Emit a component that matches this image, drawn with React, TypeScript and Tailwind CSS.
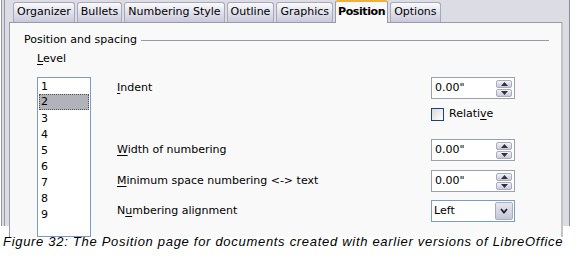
import React from "react";

const tabs = ["Organizer", "Bullets", "Numbering Style", "Outline", "Graphics", "Position", "Options"];

function U({ children }: { children: React.ReactNode }) {
  return <span className="underline underline-offset-2">{children}</span>;
}

function Spin({ value }: { value: string }) {
  return (
    <div className="w-[84px] h-[22px] border border-[#9aa0ac] bg-white flex items-center justify-between pl-[3px] pr-[2px]">
      <span>{value}</span>
      <div className="flex flex-col gap-[1px]">
        <div className="w-[16px] h-[8px] rounded-[2px] border border-[#a8acbc] bg-gradient-to-b from-[#f2f2f8] to-[#c8cad8] flex items-center justify-center">
          <svg width="7" height="4" viewBox="0 0 7 4"><path d="M0 4 L3.5 0 L7 4 Z" fill="#303040" /></svg>
        </div>
        <div className="w-[16px] h-[8px] rounded-[2px] border border-[#a8acbc] bg-gradient-to-b from-[#f2f2f8] to-[#c8cad8] flex items-center justify-center">
          <svg width="7" height="4" viewBox="0 0 7 4"><path d="M0 0 L3.5 4 L7 0 Z" fill="#303040" /></svg>
        </div>
      </div>
    </div>
  );
}

export default function App() {
  return (
    <div className="w-[582px] h-[257px] bg-white overflow-hidden text-[11px] text-black" style={{ fontFamily: '"DejaVu Sans", sans-serif' }}>
      <div className="h-[226px] flex">
        {/* left double border */}
        <div className="w-[9px] flex bg-[#dcdce4]">
          <div className="w-[1px] bg-white" />
          <div className="w-[1px] bg-[#9898a4]" />
          <div className="w-[2px] bg-[#dcdce4]" />
          <div className="w-[1px] bg-[#9898a4]" />
        </div>

        <div className="w-[554px] flex flex-col bg-[#dcdce4]">
          {/* tabs */}
          <div className="h-[25px] flex items-end gap-[2px] pl-[4px]">
            {tabs.map((t) =>
              t === "Position" ? (
                <div key={t} className="h-[23px] px-[2px] -mb-[1px] bg-[#f9f9f9] border border-b-0 border-[#9a9aa4] border-t-2 border-t-[#f0b040] rounded-t-[3px] flex items-center font-bold tracking-[-0.4px] relative z-10">
                  {t}
                </div>
              ) : (
                <div key={t} className="h-[20px] px-[3px] bg-gradient-to-b from-[#fafafc] to-[#c8c8dc] border border-b-0 border-[#a8a8b8] rounded-t-[3px] flex items-center">
                  {t}
                </div>
              )
            )}
          </div>

          {/* panel */}
          <div className="flex-1 bg-[#f9f9f9] border-t border-l border-[#9a9aa4] border-r-2 border-r-[#c4c4c8] pl-[14px] pt-[10px]">
            <div className="flex items-center gap-[4px] h-[14px]">
              <span>Position and spacing</span>
              <div className="w-[408px] h-[1px] bg-[#9a9aa4] mt-[1px]" />
            </div>

            <div className="flex mt-[4px]">
              <div className="w-[93px] pl-[13px]">
                <div className="h-[16px] leading-[16px]"><U>L</U>evel</div>
                <div className="mt-[10px] w-[54px] h-[160px] bg-white border border-[#7d9cc4] pt-[0px] pl-[1px] pr-[1px]">
                  {["1", "2", "3", "4", "5", "6", "7", "8", "9"].map((n) => (
                    <div
                      key={n}
                      className={
                        n === "2"
                          ? "h-[16px] leading-[14px] pl-[1px] bg-[#b2b2ba] border border-dotted border-[#505060]"
                          : "h-[16px] leading-[17px] pl-[2px]"
                      }
                    >
                      {n}
                    </div>
                  ))}
                </div>
              </div>

              <div className="w-[398px] pt-[26px] flex flex-col">
                <div className="h-[22px] flex items-center justify-between">
                  <span><U>I</U>ndent</span>
                  <Spin value={'0.00"'} />
                </div>
                <div className="h-[16px] mt-[7px] flex items-center justify-end">
                  <div className="w-[84px] flex items-center gap-[5px]">
                    <div className="w-[13px] h-[13px] border border-[#1c4470] bg-gradient-to-br from-[#d8d8d8] to-[#ffffff]" />
                    <span>Relati<U>v</U>e</span>
                  </div>
                </div>
                <div className="h-[22px] mt-[17px] flex items-center justify-between">
                  <span><U>W</U>idth of numbering</span>
                  <Spin value={'0.00"'} />
                </div>
                <div className="h-[22px] mt-[9px] flex items-center justify-between">
                  <span><U>M</U>inimum space numbering &lt;-&gt; text</span>
                  <Spin value={'0.00"'} />
                </div>
                <div className="h-[22px] mt-[8px] flex items-center justify-between">
                  <span>N<U>u</U>mbering alignment</span>
                  <div className="w-[84px] h-[22px] border border-[#7d9cc4] bg-white flex items-center justify-between pl-[2px] pr-[1px]">
                    <span>Left</span>
                    <div className="w-[18px] h-[18px] border border-[#a8acbc] rounded-[2px] bg-gradient-to-b from-[#e8e8f2] to-[#c4c6d6] flex items-center justify-center">
                      <svg width="8" height="6" viewBox="0 0 8 6"><path d="M1 1 L4 4.5 L7 1" stroke="#202030" strokeWidth="1.8" fill="none" /></svg>
                    </div>
                  </div>
                </div>
              </div>
            </div>
          </div>
        </div>

        {/* right edge */}
        <div className="w-[6px] bg-[#dcdce4]" />
        <div className="w-[1px] bg-[#8a8a98]" />
        <div className="flex-1 bg-white" />
      </div>

      <div className="pl-[3px] pt-[6px] italic text-[13px] tracking-[0.7px]" style={{ fontFamily: '"Liberation Sans", sans-serif' }}>
        Figure 32: The Position page for documents created with earlier versions of LibreOffice
      </div>
    </div>
  );
}
